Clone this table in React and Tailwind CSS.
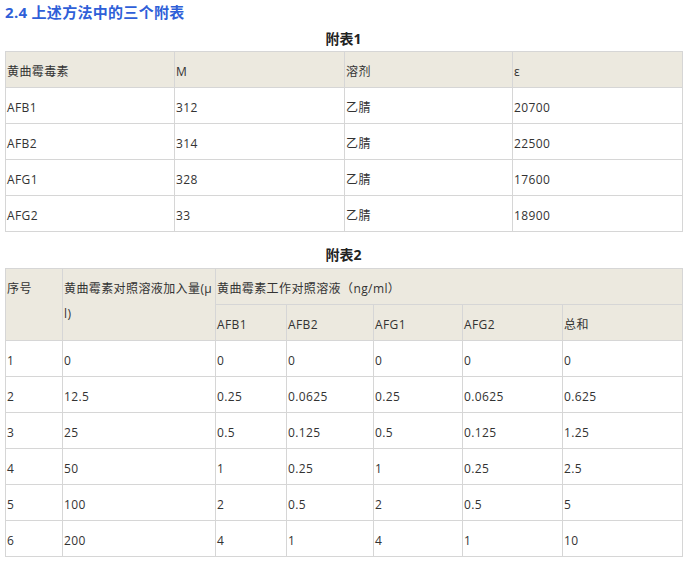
const font = {
  fontFamily: '"Open Sans", "Noto Sans CJK SC", sans-serif',
};

const table1 = [
  ["AFB1", "312", "乙腈", "20700"],
  ["AFB2", "314", "乙腈", "22500"],
  ["AFG1", "328", "乙腈", "17600"],
  ["AFG2", "33", "乙腈", "18900"],
];

const table2 = [
  ["1", "0", "0", "0", "0", "0", "0"],
  ["2", "12.5", "0.25", "0.0625", "0.25", "0.0625", "0.625"],
  ["3", "25", "0.5", "0.125", "0.5", "0.125", "1.25"],
  ["4", "50", "1", "0.25", "1", "0.25", "2.5"],
  ["5", "100", "2", "0.5", "2", "0.5", "5"],
  ["6", "200", "4", "1", "4", "1", "10"],
];

// every cell shares the same box: 1px border, 35px of padding + line
const cell = "border border-[#d6d6d6] px-px pt-[7px] pb-[3px] leading-[25px] align-top text-left font-normal";

export default function App() {
  return (
    <div className="min-h-screen bg-white px-[5px] pt-[2px] text-[12px] tracking-[0.4px] text-[#333]" style={font}>
      <h2 className="text-[15px] font-bold leading-[20px] tracking-[0.3px] text-[#2f5fd8]">2.4 上述方法中的三个附表</h2>

      {/* 附表1 */}
      <p className="mt-[7px] text-center text-[14px] font-bold leading-[20px] tracking-normal text-[#222]">附表1</p>
      <table className="mt-[2px] w-[677px] table-fixed border-collapse">
        <colgroup>
          <col className="w-[169px]" />
          <col className="w-[170px]" />
          <col className="w-[168px]" />
          <col className="w-[170px]" />
        </colgroup>
        <thead>
          <tr className="bg-[#ece9df]">
            <th className={cell}>黄曲霉毒素</th>
            <th className={cell}>M</th>
            <th className={cell}>溶剂</th>
            <th className={cell}>ε</th>
          </tr>
        </thead>
        <tbody>
          {table1.map((row) => (
            <tr key={row[0]}>
              {row.map((v, i) => (
                <td key={i} className={cell}>{v}</td>
              ))}
            </tr>
          ))}
        </tbody>
      </table>

      {/* 附表2 */}
      <p className="mt-[13px] text-center text-[14px] font-bold leading-[20px] tracking-normal text-[#222]">附表2</p>
      <table className="mt-[3px] w-[677px] table-fixed border-collapse">
        <colgroup>
          <col className="w-[57px]" />
          <col className="w-[153px]" />
          <col className="w-[71px]" />
          <col className="w-[87px]" />
          <col className="w-[89px]" />
          <col className="w-[100px]" />
          <col className="w-[120px]" />
        </colgroup>
        <thead className="bg-[#ece9df]">
          <tr>
            <th rowSpan={2} className={cell}>序号</th>
            <th rowSpan={2} className={cell + " whitespace-nowrap"}>
              黄曲霉素对照溶液加入量(μ
              <br />
              l)
            </th>
            <th colSpan={5} className={cell}>黄曲霉素工作对照溶液（ng/ml）</th>
          </tr>
          <tr>
            <th className={cell}>AFB1</th>
            <th className={cell}>AFB2</th>
            <th className={cell}>AFG1</th>
            <th className={cell}>AFG2</th>
            <th className={cell}>总和</th>
          </tr>
        </thead>
        <tbody>
          {table2.map((row) => (
            <tr key={row[0]}>
              {row.map((v, i) => (
                <td key={i} className={cell}>{v}</td>
              ))}
            </tr>
          ))}
        </tbody>
      </table>
    </div>
  );
}
